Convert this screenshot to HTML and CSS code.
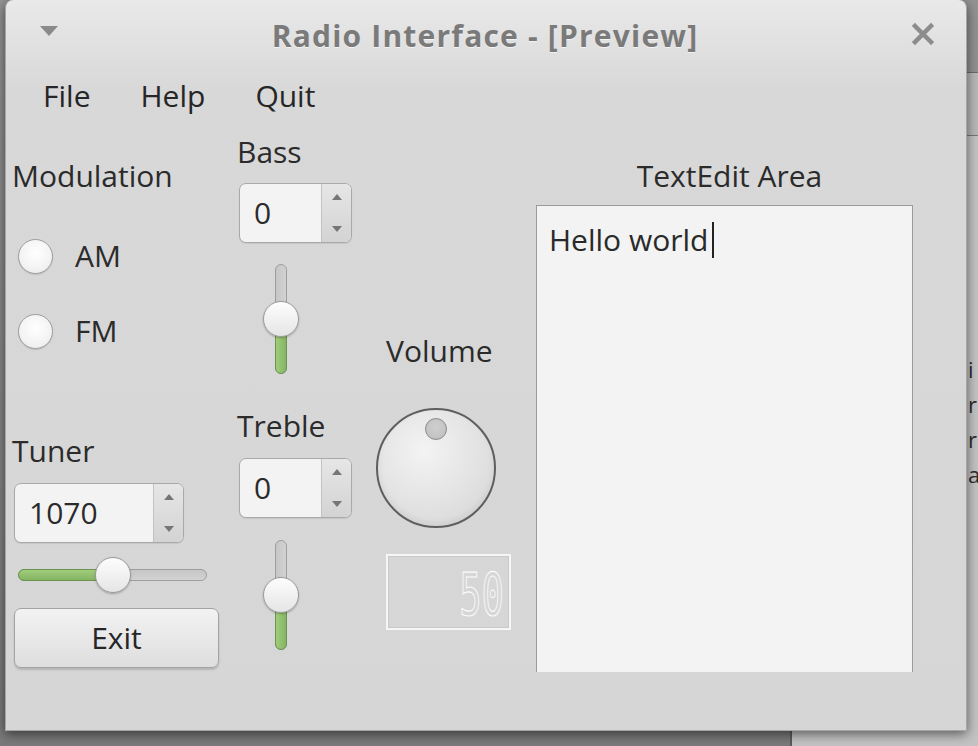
FILE: index.html
```html
<!DOCTYPE html>
<html lang="en">
<head>
<meta charset="utf-8">
<title>Radio Interface - [Preview]</title>
<link rel="stylesheet" href="styles.css">
</head>
<body>
<div class="desktop">
  <div class="bgwin">
    <div class="bgwin-bar"></div>
    <div class="bgwin-text"><p>i</p><p>r</p><p>r</p><p>a</p></div>
  </div>
  <div class="window">
    <header class="titlebar">
      <svg class="tb-menu" viewBox="0 0 20 10"><path d="M1 0 H19 L10 10 Z" fill="#8a8a8a"/></svg>
      <span class="title">Radio Interface - [Preview]</span>
      <svg class="tb-close" viewBox="0 0 24 24"><path d="M4 4 L20 20 M20 4 L4 20" stroke="#8c8c8c" stroke-width="4.5" stroke-linecap="square"/></svg>
    </header>
    <nav class="menubar"><span>File</span><span>Help</span><span>Quit</span></nav>
    <main class="content">
      <section class="col col1">
        <div class="label lbl-mod">Modulation</div>
        <label class="radio r-am"><span class="radio-dot"></span>AM</label>
        <label class="radio r-fm"><span class="radio-dot"></span>FM</label>
        <div class="label lbl-tuner">Tuner</div>
        <div class="spin spin-tuner">
          <span class="spin-val">1070</span>
          <span class="spin-btns"><i class="arr-up"></i><i class="arr-down"></i></span>
        </div>
        <div class="hslider">
          <span class="groove"></span>
          <span class="fill"></span>
          <span class="handle"></span>
        </div>
        <button class="btn">Exit</button>
      </section>
      <section class="col col2">
        <div class="label lbl-bass">Bass</div>
        <div class="spin spin-small spin-bass">
          <span class="spin-val">0</span>
          <span class="spin-btns"><i class="arr-up"></i><i class="arr-down"></i></span>
        </div>
        <div class="vslider vs-bass">
          <span class="groove"></span>
          <span class="fill"></span>
          <span class="handle"></span>
        </div>
        <div class="label lbl-treble">Treble</div>
        <div class="spin spin-small spin-treble">
          <span class="spin-val">0</span>
          <span class="spin-btns"><i class="arr-up"></i><i class="arr-down"></i></span>
        </div>
        <div class="vslider vs-treble">
          <span class="groove"></span>
          <span class="fill"></span>
          <span class="handle"></span>
        </div>
      </section>
      <section class="col col3">
        <div class="label lbl-vol">Volume</div>
        <div class="dial"><span class="notch"></span></div>
        <div class="lcd"><span class="lcd-digits">50</span></div>
      </section>
      <section class="col col4">
        <div class="label lbl-text">TextEdit Area</div>
        <div class="textedit">Hello world<span class="caret"></span></div>
      </section>
    </main>
  </div>
</div>
</body>
</html>
```
FILE: styles.css
```css
* { box-sizing: border-box; }
html, body { margin: 0; height: 100%; }
body {
  font-family: "Open Sans", "Noto Sans", sans-serif;
  font-size: 30px;
  line-height: 36px;
  color: #2b2b2b;
  background: #848484;
  overflow: hidden;
}
.desktop {
  position: relative;
  width: 978px;
  height: 746px;
  padding-left: 5px;
  background: linear-gradient(#939393, #7a7a7a);
}
.bgwin {
  position: absolute;
  left: 790px;
  top: 72px;
  right: 0;
  bottom: 0;
  background: #c3c3c3;
  border-top: 1px solid #6a6a6a;
  border-left: 2px solid #5c5c5c;
}
.bgwin-bar {
  height: 63px;
  background: #b8b8b8;
  border-bottom: 1px solid #777;
}
.bgwin-text {
  padding: 216px 0 0 176px;
  color: #2d2d2d;
  font-size: 22px;
  line-height: 35px;
}
.bgwin-text p { margin: 0; height: 35px; }

.window {
  position: relative;
  z-index: 1;
  width: 962px;
  height: 731px;
  border: 1px solid #a6a6a6;
  border-top: 0;
  border-radius: 8px 8px 0 0;
  background: linear-gradient(#e9e9e9 0, #d8d8d8 90px, #d6d6d6 100%);
  box-shadow: 0 3px 12px rgba(0, 0, 0, 0.55);
}
.titlebar {
  height: 72px;
  display: flex;
  align-items: center;
  padding: 0 31px 0 33px;
}
.tb-menu { width: 20px; height: 10px; margin-top: -10px; }
.tb-close { width: 24px; height: 24px; margin-top: -4px; }
.title {
  flex: 1;
  text-align: center;
  font-weight: 700;
  font-size: 30px;
  letter-spacing: 1.2px;
  color: #7a7a7a;
  text-shadow: 0 1px 0 rgba(255, 255, 255, 0.6);
}
.menubar {
  height: 48px;
  display: flex;
  align-items: center;
  gap: 50px;
  padding-left: 37px;
  color: #262626;
}
.content {
  display: grid;
  grid-template-columns: 225px 139px 160px 377px;
  padding-left: 6px;
}
.col { display: flex; flex-direction: column; align-items: flex-start; }
.label { height: 36px; white-space: nowrap; }

/* column 1 */
.lbl-mod { margin-top: 38px; }
.radio { display: flex; align-items: center; height: 36px; }
.r-am { margin-top: 44px; }
.r-fm { margin-top: 39px; }
.radio-dot {
  width: 35px;
  height: 35px;
  border-radius: 50%;
  border: 1px solid #9d9d9d;
  background: radial-gradient(circle at 50% 40%, #ffffff, #f3f3f3 60%, #e6e6e6);
  box-shadow: 0 1px 1px rgba(0, 0, 0, 0.12);
  margin-left: 6px;
  margin-right: 22px;
}
.lbl-tuner { margin-top: 84px; }

.spin {
  display: flex;
  height: 60px;
  border: 1px solid #a9a9a9;
  border-radius: 7px;
  background: #f3f3f3;
  overflow: hidden;
  box-shadow: 0 1px 1px rgba(0, 0, 0, 0.08);
}
.spin-tuner { width: 170px; margin-top: 14px; margin-left: 2px; }
.spin-small { width: 113px; margin-left: 2px; }
.spin-bass { margin-top: 13px; }
.spin-treble { margin-top: 14px; }
.spin-val { flex: 1; display: flex; align-items: center; padding-left: 14px; }
.spin-btns {
  width: 30px;
  border-left: 1px solid #c3c3c3;
  background: linear-gradient(#e6e6e6, #d3d3d3);
  display: flex;
  flex-direction: column;
  justify-content: space-between;
  align-items: center;
  padding: 10px 0;
}
.arr-up, .arr-down { width: 0; height: 0; border-left: 5px solid transparent; border-right: 5px solid transparent; }
.arr-up { border-bottom: 6px solid #767676; }
.arr-down { border-top: 6px solid #767676; }

.hslider { position: relative; width: 189px; height: 36px; margin-top: 14px; margin-left: 6px; }
.groove, .fill { position: absolute; border-radius: 6px; }
.groove { background: linear-gradient(#c6c6c6, #d2d2d2); border: 1px solid #9e9e9e; }
.fill { background: linear-gradient(#9fcd7a, #85b463); border: 1px solid #6b9450; }
.hslider .groove { left: 0; right: 0; top: 12px; height: 12px; }
.hslider .fill { left: 0; width: 96px; top: 12px; height: 12px; }
.handle {
  position: absolute;
  width: 36px;
  height: 36px;
  border-radius: 50%;
  border: 1px solid #9a9a9a;
  background: linear-gradient(#fdfdfd, #e5e5e5);
  box-shadow: 0 1px 2px rgba(0, 0, 0, 0.25);
}
.hslider .handle { left: 77px; top: 0; }

.btn {
  margin-top: 15px;
  margin-left: 2px;
  width: 205px;
  height: 60px;
  font: inherit;
  color: #262626;
  border: 1px solid #a3a3a3;
  border-radius: 7px;
  background: linear-gradient(#f2f2f2, #dedede);
  box-shadow: 0 2px 2px rgba(0, 0, 0, 0.15);
  padding: 0;
}

/* column 2 */
.lbl-bass { margin-top: 14px; }
.vslider { position: relative; width: 40px; height: 110px; margin-left: 24px; }
.vs-bass { margin-top: 21px; }
.vs-treble { margin-top: 22px; }
.vslider .groove { left: 14px; width: 12px; top: 0; bottom: 0; background: linear-gradient(90deg, #c6c6c6, #d2d2d2); }
.vslider .fill { left: 14px; width: 12px; top: 55px; bottom: 0; background: linear-gradient(90deg, #9fcd7a, #85b463); }
.vslider .handle { left: 2px; top: 37px; }
.lbl-treble { margin-top: 34px; }

/* column 3 */
.lbl-vol { margin-top: 213px; padding-left: 10px; }
.dial {
  position: relative;
  margin-top: 39px;
  width: 120px;
  height: 120px;
  border-radius: 50%;
  border: 2px solid #5e5e5e;
  background: radial-gradient(circle at 40% 35%, #f3f3f3, #e2e2e2 55%, #d3d3d3 100%);
  box-shadow: inset 0 -3px 6px rgba(0, 0, 0, 0.06);
}
.notch {
  position: absolute;
  left: 47px;
  top: 8px;
  width: 22px;
  height: 22px;
  border-radius: 50%;
  border: 1px solid #8a8a8a;
  background: radial-gradient(circle at 50% 40%, #cfcfcf, #bdbdbd);
}
.lcd {
  margin-top: 26px;
  margin-left: 10px;
  width: 125px;
  height: 76px;
  border: 2px solid #f6f6f6;
  box-shadow: inset 0 0 0 1px #cacaca;
  display: flex;
  align-items: center;
  justify-content: flex-end;
  padding-right: 5px;
  overflow: hidden;
}
.lcd-digits {
  font-family: "DejaVu Sans Mono", "Liberation Mono", monospace;
  font-size: 58px;
  line-height: 58px;
  color: transparent;
  -webkit-text-stroke: 1.2px #fbfbfb;
  transform: scaleX(0.64);
  transform-origin: right center;
  margin-top: 6px;
}

/* column 4 */
.lbl-text { margin-top: 38px; align-self: stretch; text-align: center; padding-left: 10px; }
.textedit {
  margin-top: 11px;
  width: 377px;
  height: 467px;
  border: 1px solid #9b9b9b;
  border-bottom: 0;
  background: #f3f3f3;
  padding: 16px 12px;
  color: #2a2a2a;
}
.caret {
  display: inline-block;
  width: 2px;
  height: 36px;
  margin-left: 4px;
  background: #222;
  vertical-align: top;
}
```
